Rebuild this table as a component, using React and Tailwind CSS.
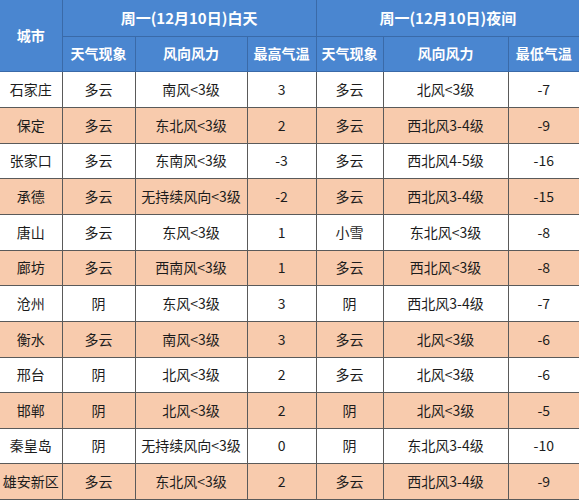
import React from "react";

const rows = [
  ["石家庄", "多云", "南风<3级", "3", "多云", "北风<3级", "-7"],
  ["保定", "多云", "东北风<3级", "2", "多云", "西北风3-4级", "-9"],
  ["张家口", "多云", "东南风<3级", "-3", "多云", "西北风4-5级", "-16"],
  ["承德", "多云", "无持续风向<3级", "-2", "多云", "西北风3-4级", "-15"],
  ["唐山", "多云", "东风<3级", "1", "小雪", "东北风<3级", "-8"],
  ["廊坊", "多云", "西南风<3级", "1", "多云", "西北风<3级", "-8"],
  ["沧州", "阴", "东风<3级", "3", "阴", "西北风3-4级", "-7"],
  ["衡水", "多云", "南风<3级", "3", "多云", "北风<3级", "-6"],
  ["邢台", "阴", "北风<3级", "2", "多云", "北风<3级", "-6"],
  ["邯郸", "阴", "北风<3级", "2", "阴", "北风<3级", "-5"],
  ["秦皇岛", "阴", "无持续风向<3级", "0", "阴", "东北风3-4级", "-10"],
  ["雄安新区", "多云", "东北风<3级", "2", "多云", "西北风3-4级", "-9"],
];

const heights = ["h-[36px]", "h-[36px]", "h-[35px]", "h-[36px]", "h-[36px]", "h-[35px]", "h-[36px]", "h-[36px]", "h-[35px]", "h-[36px]", "h-[35px]", "h-[36px]"];

export default function App() {
  return (
    <div className="w-[579px] h-[500px] overflow-hidden bg-white" style={{ fontFamily: '"Noto Sans CJK SC", "Noto Sans", sans-serif' }}>
      <table className="table-fixed border-collapse w-[579px] text-[14px] text-[#1c1c1c]">
        <colgroup>
          <col className="w-[62px]" />
          <col className="w-[73px]" />
          <col className="w-[112px]" />
          <col className="w-[69px]" />
          <col className="w-[67px]" />
          <col className="w-[125px]" />
          <col className="w-[71px]" />
        </colgroup>
        <thead className="bg-[#4a86d0] text-white font-bold">
          <tr className="h-[36px]">
            <th rowSpan={2} className="border-r border-b border-[#3a6aa8] p-0 text-[14px]">城市</th>
            <th colSpan={3} className="border-r border-b border-[#3a6aa8] p-0 text-[15px]">周一(12月10日)白天</th>
            <th colSpan={3} className="border-b border-[#3a6aa8] p-0 text-[15px]">周一(12月10日)夜间</th>
          </tr>
          <tr className="h-[35px]">
            <th className="border-r border-b border-[#3a6aa8] p-0 text-[14px]">天气现象</th>
            <th className="border-r border-b border-[#3a6aa8] p-0 text-[14px]">风向风力</th>
            <th className="border-r border-b border-[#3a6aa8] p-0 text-[14px]">最高气温</th>
            <th className="border-r border-b border-[#3a6aa8] p-0 text-[14px]">天气现象</th>
            <th className="border-r border-b border-[#3a6aa8] p-0 text-[14px]">风向风力</th>
            <th className="border-b border-[#3a6aa8] p-0 text-[14px]">最低气温</th>
          </tr>
        </thead>
        <tbody>
          {rows.map((r, i) => (
            <tr key={i} className={`${heights[i]} ${i % 2 === 1 ? "bg-[#f8cbad]" : "bg-white"}`}>
              {r.map((c, j) => (
                <td
                  key={j}
                  className={`p-0 text-center border-b border-[#5a5a5a] ${j < 6 ? "border-r" : ""}`}
                >
                  {c}
                </td>
              ))}
            </tr>
          ))}
        </tbody>
      </table>
    </div>
  );
}
